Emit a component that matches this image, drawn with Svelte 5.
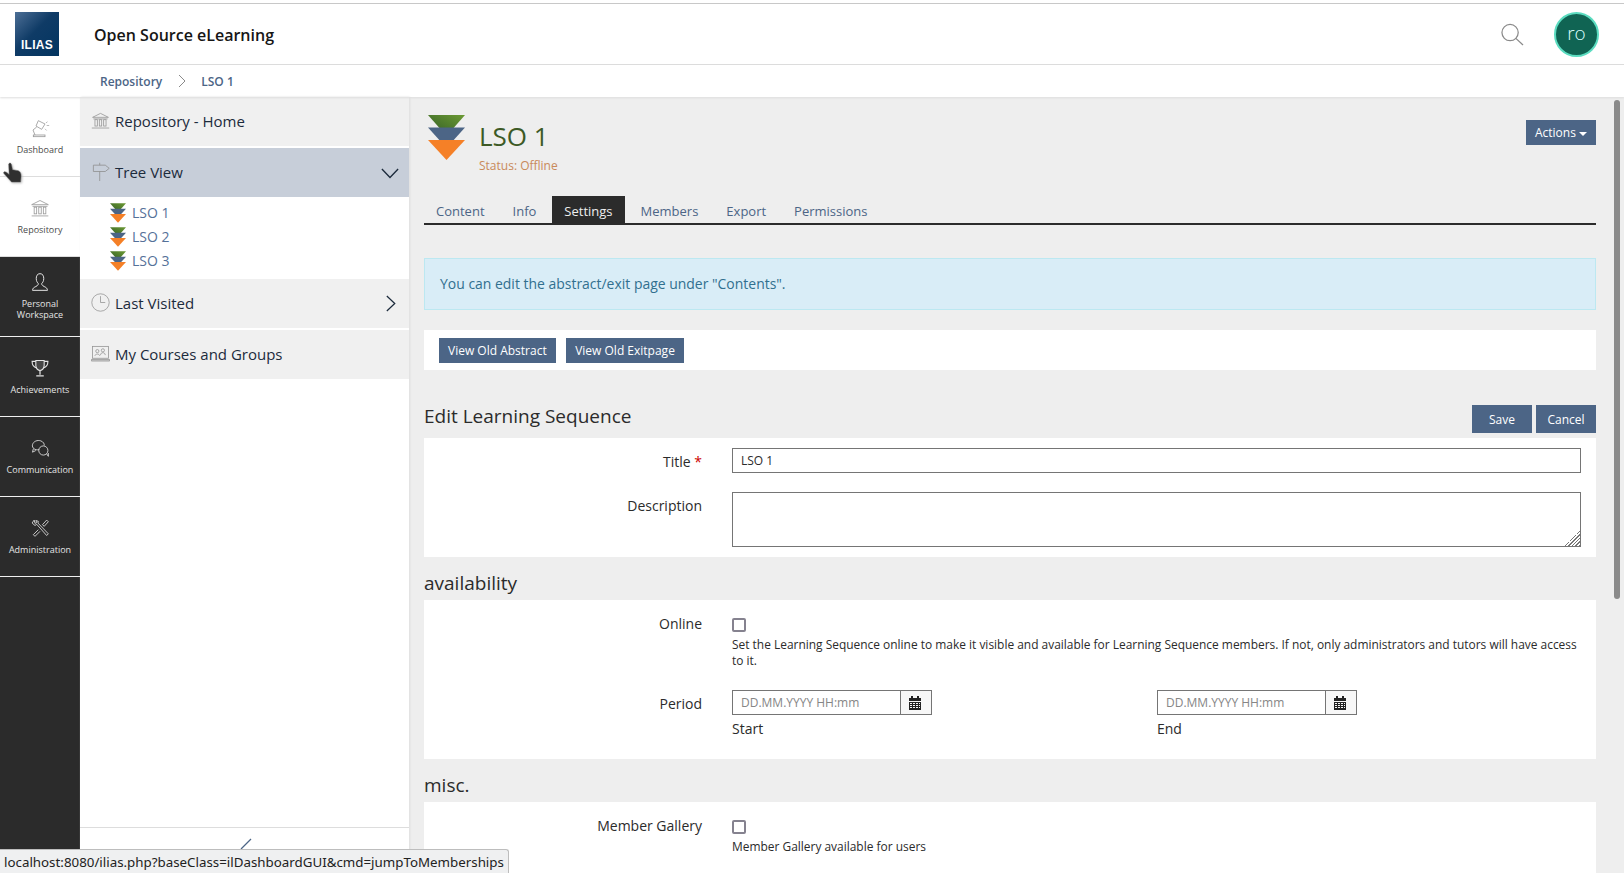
<script lang="ts">
	const railTop = [
		{ label: ['Dashboard'], icon: 'lamp' },
		{ label: ['Repository'], icon: 'bank' }
	];
	const railDark = [
		{ label: ['Personal', 'Workspace'], icon: 'person' },
		{ label: ['Achievements'], icon: 'trophy' },
		{ label: ['Communication'], icon: 'chat' },
		{ label: ['Administration'], icon: 'tools' }
	];
	const treeItems = ['LSO 1', 'LSO 2', 'LSO 3'];
	const tabs = ['Content', 'Info', 'Settings', 'Members', 'Export', 'Permissions'];
</script>

{#snippet railIcon(name: string)}
	<svg class="rail-icon" viewBox="0 0 24 24" fill="none" stroke="currentColor" stroke-width="1">
		{#if name === 'lamp'}
			<path d="M10 3.200 L18 7.200 L14 13.600 L7.200 9.600 Z" />
			<path d="M8 10.800 L3.600 14.400 L6 20.400" />
			<rect x="4" y="20.400" width="14" height="2" />
			<path d="M19 6 L21 4.500 M20 9 L23 9 M18 13 L20 15" stroke-width="0.8" />
		{:else if name === 'bank'}
			<path d="M2 8 L12 3 L22 8 Z" />
			<path d="M2 21.5 H22 M3 10 H21" />
			<rect x="5" y="11" width="3" height="8" />
			<rect x="10.5" y="11" width="3" height="8" />
			<rect x="16" y="11" width="3" height="8" />
		{:else if name === 'person'}
			<path d="M12 2 C8.5 2 7.5 5 7.5 8 C7.5 11 9 13 10 14 C10 16 8 17 5 18.5 C3.5 19.5 3 21 3 22 H21 C21 21 20.5 19.5 19 18.5 C16 17 14 16 14 14 C15 13 16.500 11 16.500 8 C16.500 5 15.500 2 12 2 Z" stroke-width="1.2" />
		{:else if name === 'trophy'}
			<path d="M7 3 H17 V9 C17 13 14 15 12 15 C10 15 7 13 7 9 Z" fill="currentColor" fill-opacity="0.15" stroke-width="1.3" />
			<path d="M7 4 H2.500 C2.500 8 4 11 8 12 M17 4 H21.500 C21.500 8 20 11 16 12" stroke-width="1.3" />
			<path d="M12 15 V20 M7.500 21.500 H16.500" stroke-width="1.5" />
		{:else if name === 'chat'}
			<path d="M11 14 C6 15 2 12 3 8 C4 4 9 2 13 3.500 C16 4.600 17.500 7 17 9 M4 13 L3 17 L7 15" />
			<circle cx="16" cy="15" r="5.500" />
			<path d="M20 19 L22 22 V18" />
		{:else if name === 'tools'}
			<path d="M5 2.500 L2.500 6 L6 9 L8 7.500 L20 21 L22 19 L9.500 6 L10 4 L7 3 L8 5.500 L6 6.500 Z" />
			<path d="M20 2.500 L22 4.500 L17 10 L15 8 Z M10 14 L4 20 L6 22 L12 16" />
		{/if}
	</svg>
{/snippet}

{#snippet lsoIcon()}
	<svg class="lso" viewBox="0 0 37 45">
		<defs>
			<linearGradient id="lso-green" x1="1" x2="0" y1="0" y2="1">
				<stop offset="0" stop-color="#6c9a33" />
				<stop offset="1" stop-color="#2f5a26" />
			</linearGradient>
		</defs>
		<path d="M0 0 H37 L18.500 21 Z" fill="url(#lso-green)" />
		<path d="M0 12.500 H37 L18.500 33 Z" fill="#4c6586" />
		<path d="M0 25 H37 L18.500 45 Z" fill="#f58027" />
	</svg>
{/snippet}

{#snippet calendar()}
	<svg class="cal" viewBox="0 0 14 14" fill="#222">
		<rect x="3" y="0" width="2" height="3" />
		<rect x="9" y="0" width="2" height="3" />
		<rect x="1" y="2" width="12" height="3" />
		<path d="M1 6 H13 V14 H1 Z M2 7 V8 H4 V7 Z M5 7 V8 H7 V7 Z M8 7 V8 H10 V7 Z M11 7 V8 H12 V7 Z M2 9 V10 H4 V9 Z M5 9 V10 H7 V9 Z M8 9 V10 H10 V9 Z M11 9 V10 H12 V9 Z M2 11 V12 H4 V11 Z M5 11 V12 H7 V11 Z M8 11 V12 H10 V11 Z M11 11 V12 H12 V11 Z" fill-rule="evenodd" />
	</svg>
{/snippet}

<div class="page">
	<header class="topbar">
		<div class="logo"><span>ILIAS</span></div>
		<div class="site-title">Open Source eLearning</div>
		<svg class="search" viewBox="0 0 24 24" fill="none" stroke="#8a8a8a" stroke-width="1.300">
			<circle cx="10" cy="10" r="8.500" />
			<path d="M16 16 L23.500 23" />
		</svg>
		<div class="avatar">ro</div>
	</header>

	<nav class="crumbs">
		<a href="#top">Repository</a>
		<svg class="crumb-sep" viewBox="0 0 8 14" fill="none" stroke="#8a8a8a"><path d="M1 1 L7 7 L1 13" /></svg>
		<a href="#top">LSO 1</a>
	</nav>

	<div class="body">
		<aside class="rail">
			{#each railTop as item}
				<div class="rail-item light">
					{@render railIcon(item.icon)}
					{#each item.label as line}<span>{line}</span>{/each}
				</div>
			{/each}
			{#each railDark as item}
				<div class="rail-item dark" class:two={item.label.length > 1}>
					{@render railIcon(item.icon)}
					{#each item.label as line}<span>{line}</span>{/each}
				</div>
			{/each}
		</aside>

		<aside class="slate">
			<div class="slate-row">
				<svg class="slate-icon" viewBox="0 0 24 24" fill="none" stroke="#949494"><path d="M2 8 L12 3 L22 8 Z M1 21.500 H23 M3 10 H21" /><rect x="5" y="11" width="3" height="8" /><rect x="10.500" y="11" width="3" height="8" /><rect x="16" y="11" width="3" height="8" /></svg>
				Repository - Home
			</div>
			<div class="slate-row active">
				<svg class="slate-icon" viewBox="0 0 24 24" fill="none" stroke="#8e8e8e"><path d="M3 4 H18 L23 8 L18 12 H3 Z M11 12 V24 M11 1 V4" /></svg>
				Tree View
				<svg class="chev down" viewBox="0 0 20 12" fill="none" stroke="#1c2b3c" stroke-width="1.500"><path d="M1 1 L10 10.500 L19 1" /></svg>
			</div>
			<ul class="tree">
				{#each treeItems as item}
					<li>{@render lsoIcon()}<a href="#top">{item}</a></li>
				{/each}
			</ul>
			<div class="slate-row">
				<svg class="slate-icon" viewBox="0 0 24 24" fill="none" stroke="#949494"><circle cx="12" cy="12" r="11" /><path d="M12 4 V12 H18" /></svg>
				Last Visited
				<svg class="chev right" viewBox="0 0 12 20" fill="none" stroke="#1c2b3c" stroke-width="1.500"><path d="M1 1 L10.500 10 L1 19" /></svg>
			</div>
			<div class="slate-row">
				<svg class="slate-icon" viewBox="0 0 24 24" fill="none" stroke="#949494"><rect x="2" y="3" width="20" height="15" /><path d="M0.500 19.500 H23.500 V21.500 H0.500 Z" fill="#cfcfcf" /><circle cx="8" cy="9" r="2" /><circle cx="15" cy="8" r="2" /><path d="M5 15 C5 12 11 12 11 15 M12 14 C12 10 18 10 18 14" /></svg>
				My Courses and Groups
			</div>
			<div class="slate-foot">
				<svg class="foot-mark" viewBox="0 0 12 12" fill="none" stroke="#4c6586" stroke-width="1.200"><path d="M1 11 L11 1" /></svg>
			</div>
		</aside>

		<main class="content">
			<div class="title-bar">
				{@render lsoIcon()}
				<div class="title-text">
					<h1>LSO 1</h1>
					<div class="status">Status: Offline</div>
				</div>
				<button class="btn actions">Actions <i class="caret"></i></button>
			</div>

			<div class="tabs">
				{#each tabs as tab}
					<a href="#top" class="tab" class:on={tab === 'Settings'}>{tab}</a>
				{/each}
			</div>

			<div class="alert">You can edit the abstract/exit page under "Contents".</div>

			<div class="toolbar">
				<button class="btn">View Old Abstract</button>
				<button class="btn">View Old Exitpage</button>
			</div>

			<div class="form-head">
				<h2>Edit Learning Sequence</h2>
				<div class="form-actions">
					<button class="btn big">Save</button>
					<button class="btn big">Cancel</button>
				</div>
			</div>
			<section class="panel first">
				<div class="field">
					<label for="f-title">Title <em>*</em></label>
					<div class="control"><input id="f-title" class="text" value="LSO 1" /></div>
				</div>
				<div class="field">
					<label for="f-desc">Description</label>
					<div class="control"><textarea id="f-desc"></textarea></div>
				</div>
			</section>

			<h2 class="section">availability</h2>
			<section class="panel">
				<div class="field online">
					<label for="f-online">Online</label>
					<div class="control">
						<input id="f-online" type="checkbox" />
						<p class="help">Set the Learning Sequence online to make it visible and available for Learning Sequence members. If not, only administrators and tutors will have access to it.</p>
					</div>
				</div>
				<div class="field period">
					<label for="f-start">Period</label>
					<div class="control dates">
						<div>
							<div class="date">
								<input id="f-start" placeholder="DD.MM.YYYY HH:mm" />
								<span class="addon">{@render calendar()}</span>
							</div>
							<div class="date-label">Start</div>
						</div>
						<div>
							<div class="date">
								<input placeholder="DD.MM.YYYY HH:mm" />
								<span class="addon">{@render calendar()}</span>
							</div>
							<div class="date-label">End</div>
						</div>
					</div>
				</div>
			</section>

			<h2 class="section">misc.</h2>
			<section class="panel last">
				<div class="field">
					<label for="f-gallery">Member Gallery</label>
					<div class="control">
						<input id="f-gallery" type="checkbox" />
						<p class="help">Member Gallery available for users</p>
					</div>
				</div>
			</section>
		</main>

		<div class="scrollbar"><div class="thumb"></div></div>
	</div>

	<svg class="cursor" viewBox="0 0 22 24">
		<path d="M7 2 C8 0.500 9.500 1 10 3 L11 8 L17 9 C19.500 10 20 12 20 15 L19.500 21 H10 L2 12 C1 10 3 9.500 5 11 L7.500 13 Z" fill="#2f2f2f" stroke="#666" stroke-width="0.500" />
	</svg>
	<div class="statusbar">localhost:8080/ilias.php?baseClass=ilDashboardGUI&amp;cmd=jumpToMemberships</div>
</div>

<style>
	:global(body) {
		margin: 0;
		font-family: "Open Sans", sans-serif;
		color: #161616;
	}

	.page {
		position: relative;
		width: 1624px;
		height: 873px;
		overflow: hidden;
		background: #fff;
		display: flex;
		flex-direction: column;
	}

	a {
		text-decoration: none;
	}

	/* top bar */
	.topbar {
		height: 60px;
		margin-top: 3px;
		border-top: 1px solid #c8c8c8;
		border-bottom: 1px solid #dcdcdc;
		display: flex;
		align-items: center;
		padding-left: 15px;
		padding-right: 25px;
		flex: none;
	}

	.logo {
		width: 44px;
		height: 44px;
		background: linear-gradient(135deg, #4d6f96 0%, #0f3b66 45%, #033560 100%);
		display: flex;
		align-items: flex-end;
		justify-content: center;
		margin-right: 35px;
	}

	.logo span {
		font-family: "Liberation Sans", sans-serif;
		font-weight: 700;
		font-size: 12px;
		letter-spacing: 0.3px;
		color: #fff;
		padding-bottom: 4px;
	}

	.site-title {
		font-size: 16px;
		font-weight: 600;
		flex: 1;
		padding-top: 2px;
	}

	.search {
		width: 24px;
		height: 23px;
		margin-right: 30px;
	}

	.avatar {
		border: 2px solid #5bdcc0;
		border-radius: 50%;
		background: #106453;
		color: #dff;
		font-size: 19px;
		font-weight: 300;
		line-height: 38px;
		text-align: center;
		box-sizing: content-box;
		width: 41px;
		height: 41px;
	}

	.crumbs {
		height: 32px;
		flex: none;
		display: flex;
		align-items: center;
		padding-left: 100px;
		font-size: 12px;
		font-weight: 600;
		box-shadow: 0 1px 2px #ddd;
		position: relative;
		z-index: 2;
	}

	.crumbs a {
		color: #4c6586;
	}

	.crumb-sep {
		width: 8px;
		height: 14px;
		margin: 0 15.500px;
	}

	.body {
		flex: 1;
		display: flex;
		min-height: 0;
	}

	/* left rail */
	.rail {
		width: 80px;
		flex: none;
		background: #2b2b2b;
		display: flex;
		flex-direction: column;
	}

	.rail-item {
		box-sizing: border-box;
		height: 80px;
		border-bottom: 1px solid #ddd;
		display: flex;
		flex-direction: column;
		align-items: center;
		justify-content: center;
		font-size: 9px;
		line-height: 11px;
	}

	.rail-item.two {
		padding-bottom: 2px;
	}

	.rail-item.light {
		background: #fff;
		color: #4a4a4a;
	}

	.rail-item.light .rail-icon {
		color: #9a9a9a;
	}

	.rail-item.dark {
		color: #e4e4e4;
		border-bottom-color: #f0f0f0;
	}

	.rail-icon {
		width: 20px;
		height: 20px;
		margin-bottom: 6px;
	}

	/* slate */
	.slate {
		width: 329px;
		flex: none;
		display: flex;
		flex-direction: column;
		box-shadow: 1px 0 2px #ddd;
		position: relative;
		z-index: 1;
		background: #fff;
	}

	.slate-row {
		height: 49px;
		box-sizing: border-box;
		flex: none;
		background: #f0f0f0;
		margin-bottom: 2px;
		display: flex;
		align-items: center;
		padding: 0 11px 2px;
		font-size: 15px;
		color: #1c2b3c;
		position: relative;
	}

	.slate-row.active {
		background: #c7ced9;
		margin-bottom: 0;
	}

	.slate-icon {
		width: 19px;
		height: 19px;
		margin-right: 5px;
	}

	.chev {
		position: absolute;
	}

	.chev.down {
		right: 10px;
		top: 20px;
		width: 18px;
		height: 11px;
	}

	.chev.right {
		right: 13px;
		top: 15px;
		width: 10px;
		height: 19px;
	}

	.tree {
		list-style: none;
		margin: 0;
		padding: 3px 0 10px 30px;
		height: 69px;
		font-size: 14px;
	}

	.tree li {
		height: 24px;
		display: flex;
		align-items: center;
		gap: 6px;
	}

	.tree a {
		color: #557199;
	}

	.tree .lso {
		width: 16px;
		height: 20px;
		margin-top: 2px;
	}

	.slate-foot {
		margin-top: auto;
		height: 45px;
		border-top: 1px solid #ddd;
		position: relative;
	}

	.foot-mark {
		position: absolute;
		left: 160px;
		top: 10px;
		width: 12px;
		height: 12px;
	}

	/* main column */
	.content {
		flex: 1;
		min-width: 0;
		background: #eee;
		padding: 18px 28px 0 15px;
		overflow: hidden;
	}

	.title-bar {
		display: flex;
		padding-left: 4px;
		position: relative;
		height: 80px;
	}

	.title-bar .lso {
		width: 37px;
		height: 45px;
		flex: none;
	}

	.title-text {
		margin-left: 14px;
		padding-top: 6px;
	}

	h1 {
		margin: 0;
		font-size: 26px;
		font-weight: 400;
		line-height: 30px;
		color: #3d5a26;
	}

	.status {
		font-size: 12px;
		line-height: 16px;
		margin-top: 7px;
		color: #c98a5b;
	}

	.btn {
		font-family: inherit;
		background: #4c6586;
		color: #fff;
		border: 0;
		font-size: 12px;
		height: 25px;
		padding: 0 9px;
	}

	.actions {
		position: absolute;
		right: 0;
		top: 5px;
	}

	.caret {
		display: inline-block;
		border: 4px solid transparent;
		border-top-color: #fff;
		border-bottom: 0;
		vertical-align: middle;
	}

	.tabs {
		display: flex;
		border-bottom: 2px solid #2b2b2b;
		height: 28px;
		margin-bottom: 33px;
	}

	.tab {
		padding: 0 12px;
		margin-right: 4px;
		font-size: 13px;
		line-height: 33px;
		color: #4c6586;
	}

	.tab.on {
		background: #2b2b2b;
		color: #eee;
		margin-top: 1px;
		line-height: 31px;
	}

	.alert {
		background: #d9edf7;
		border: 1px solid #bce8f1;
		color: #31708f;
		font-size: 13.960px;
		height: 50px;
		line-height: 50px;
		padding-left: 15px;
		margin-bottom: 20px;
	}

	.toolbar {
		background: #fff;
		height: 40px;
		display: flex;
		align-items: center;
		gap: 10.500px;
		padding-left: 15px;
		margin-bottom: 35px;
	}

	.form-head {
		display: flex;
		justify-content: space-between;
		align-items: flex-start;
		height: 28px;
		margin-bottom: 5px;
	}

	h2 {
		margin: 0;
		font-size: 19px;
		font-weight: 400;
		line-height: 26px;
		color: #2b2b2b;
	}

	.form-head h2 {
		line-height: 23px;
	}

	.form-actions {
		display: flex;
		gap: 4px;
	}

	.btn.big {
		height: 28px;
		width: 60px;
		padding: 0;
	}

	.section {
		margin: 13px 0 4px;
	}

	.panel {
		background: #fff;
		padding: 10px 15px 10px 0;
	}

	.panel.last {
		padding-bottom: 60px;
	}

	.field {
		display: flex;
		margin-bottom: 18px;
	}

	.field.online {
		margin-bottom: 21px;
	}

	.field:last-child {
		margin-bottom: 0;
	}

	.field label {
		width: 278px;
		flex: none;
		text-align: right;
		font-size: 14px;
		line-height: 25px;
		padding-top: 1px;
		color: #2b2b2b;
		margin-right: 30px;
	}

	.field label em {
		color: #c00;
		font-style: normal;
	}

	.control {
		flex: 1;
		min-width: 0;
		font-size: 12px;
	}

	.text,
	textarea {
		display: block;
		width: 100%;
		box-sizing: border-box;
		border: 1px solid #757575;
		font-family: inherit;
		font-size: 12px;
		padding: 0 8px;
		height: 25px;
		color: #2b2b2b;
		margin: 0;
	}

	textarea {
		height: 55px;
		resize: vertical;
	}

	textarea::-webkit-resizer {
		background:
			linear-gradient(135deg, #fff 50%, transparent 50%),
			repeating-linear-gradient(135deg, #777 0 1px, #fff 1px 2.500px);
	}

	input[type="checkbox"] {
		appearance: none;
		display: block;
		width: 14px;
		height: 14px;
		box-sizing: border-box;
		border: 2px solid #85828f;
		border-radius: 2px;
		margin: 8px 0 0;
		background: #fff;
	}

	.help {
		margin: 5px 0 0;
		font-size: 11.950px;
		line-height: 16px;
		color: #2b2b2b;
	}

	.dates {
		display: flex;
	}

	.dates > div {
		width: 425px;
		flex: none;
	}

	.date {
		display: flex;
		width: 200px;
		height: 25px;
		border: 1px solid #757575;
		box-sizing: border-box;
	}

	.date input {
		flex: 1;
		min-width: 0;
		border: 0;
		border-right: 1px solid #757575;
		padding: 0 8px;
		font-family: inherit;
		font-size: 12px;
		margin: 0;
	}

	.date input::placeholder {
		color: #868686;
	}

	.addon {
		width: 30px;
		background: #f7f7f7;
		display: flex;
		align-items: center;
		justify-content: center;
	}

	.cal {
		width: 14px;
		height: 14px;
		margin-right: 2px;
	}

	.date-label {
		font-size: 14px;
		line-height: 19px;
		margin-top: 4px;
		margin-bottom: 11px;
		color: #2b2b2b;
	}

	.scrollbar {
		width: 15px;
		flex: none;
		position: relative;
		margin-left: -15px;
		z-index: 2;
	}

	.thumb {
		position: absolute;
		left: 5px;
		top: 3px;
		width: 6px;
		height: 499px;
		border-radius: 3px;
		background: #8a8a8a;
	}

	/* browser overlays */
	.cursor {
		position: absolute;
		left: 2px;
		top: 162px;
		width: 21px;
		height: 23px;
		z-index: 5;
		filter: drop-shadow(1px 1px 1px #bbb);
	}

	.statusbar {
		position: absolute;
		left: 0;
		bottom: 0;
		height: 24px;
		line-height: 24px;
		padding: 0 4px;
		width: 509px;
		box-sizing: border-box;
		background: #eff0f1;
		border: 1px solid #bdbdbd;
		border-left: 0;
		border-bottom: 0;
		border-top-right-radius: 3px;
		font-family: "Noto Sans", sans-serif;
		font-size: 13.330px;
		color: #222;
		z-index: 6;
		white-space: nowrap;
	}
</style>
